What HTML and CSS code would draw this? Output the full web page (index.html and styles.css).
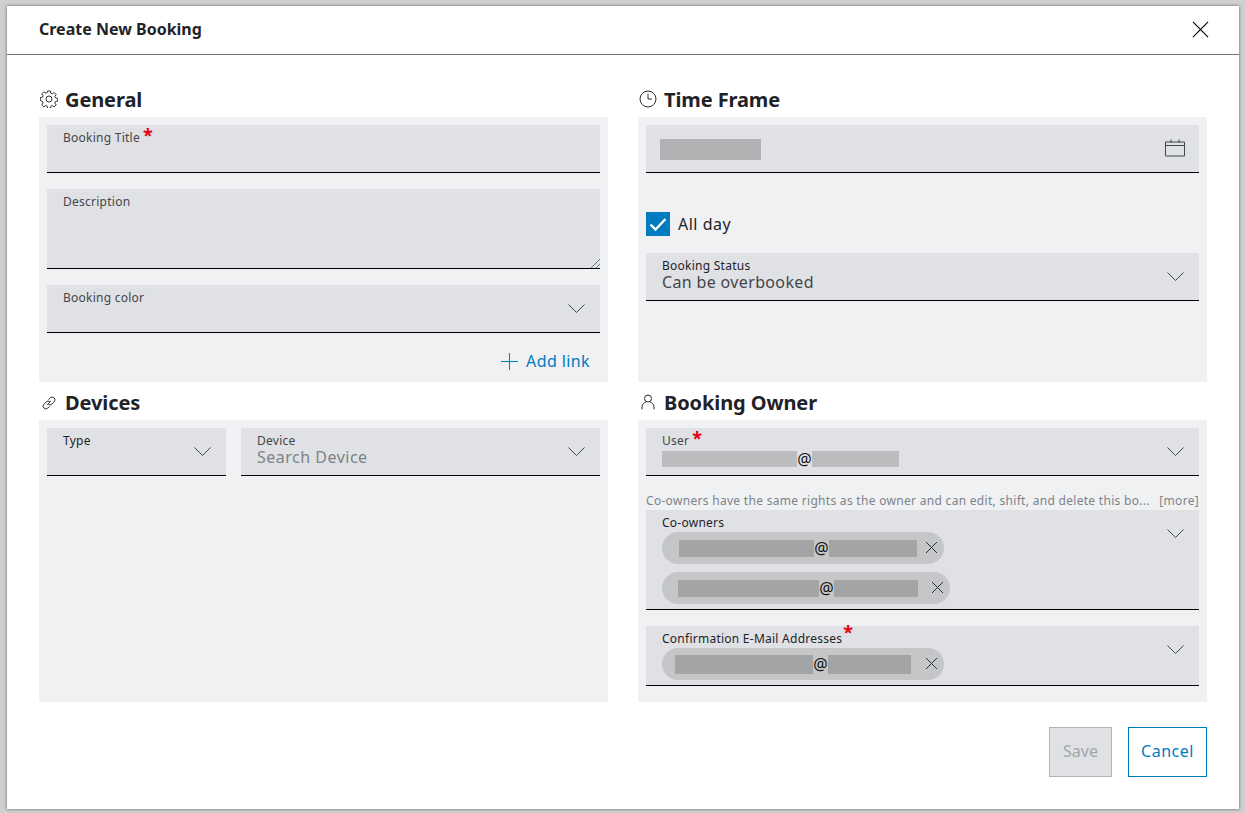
FILE: index.html
```html
<!DOCTYPE html>
<html lang="en">
<head>
    <meta charset="UTF-8">
    <meta name="viewport" content="width=device-width, initial-scale=1.0">
    <title>Create New Booking</title>
    <link rel="stylesheet" href="styles.css">
</head>
<body>

    <div class="modal">
        <div class="modal-header">
            <h1>Create New Booking</h1>
            <svg class="close-icon" viewBox="0 0 18 18"><path d="M1 1l16 16M17 1L1 17"/></svg>
        </div>

        <div class="modal-body">
            <section class="section">
                <h2>
                    <svg class="head-icon" viewBox="0 0 18 18"><circle cx="9" cy="9" r="3"/><path d="M7.6 1h2.8l.4 2.2 1.5.6 1.9-1.3 2 2-1.3 1.9.6 1.5 2.2.4v2.8l-2.2.4-.6 1.5 1.3 1.9-2 2-1.9-1.3-1.5.6-.4 2.2H7.6l-.4-2.2-1.5-.6-1.9 1.3-2-2 1.3-1.9-.6-1.5L.3 10.400V7.600l2.200-.4.6-1.500-1.300-1.900 2-2 1.900 1.300 1.500-.6z"/></svg>
                    General
                </h2>
                <div class="panel">
                    <div class="field">
                        <div class="field-main"><label>Booking Title<span class="req">*</span></label></div>
                    </div>
                    <div class="field field-tall">
                        <div class="field-main"><label>Description</label></div>
                        <svg class="resizer" viewBox="0 0 9 9"><path d="M0 9l9-9M5 9l4-4"/></svg>
                    </div>
                    <div class="field">
                        <div class="field-main"><label>Booking color</label></div>
                        <svg class="chevron" viewBox="0 0 17 9"><path d="M.5.5l8 8 8-8"/></svg>
                    </div>
                    <div class="add-link">
                        <svg viewBox="0 0 17 17"><path d="M8.500 0v17M0 8.500h17"/></svg>
                        Add link
                    </div>
                </div>
            </section>

            <section class="section">
                <h2>
                    <svg class="head-icon" viewBox="0 0 18 18"><circle cx="9" cy="9" r="8"/><path d="M9 3.500V9h4"/></svg>
                    Time Frame
                </h2>
                <div class="panel">
                    <div class="field field-date">
                        <div class="redacted date-block"></div>
                        <svg class="calendar" viewBox="0 0 20 18"><path d="M.5 3h19v14H.5zM.5 6.500h19M6 .5V4M14 .5V4"/></svg>
                    </div>
                    <div class="check-row">
                        <span class="checkbox"><svg viewBox="0 0 24 24"><path d="M4.500 12.500l5 5 10-10.500"/></svg></span>
                        All day
                    </div>
                    <div class="field field-status">
                        <div class="field-main">
                            <label class="dark">Booking Status</label>
                            <div class="value">Can be overbooked</div>
                        </div>
                        <svg class="chevron" viewBox="0 0 17 9"><path d="M.5.5l8 8 8-8"/></svg>
                    </div>
                </div>
            </section>

            <section class="section section-low">
                <h2>
                    <svg class="head-icon link-icon" viewBox="0 0 14 14"><path d="M5.200 8.800L8.800 5.200M6.500 3.600l1.700-1.700a2.500 2.500 0 0 1 3.900 3.900l-2.300 2.300a2.500 2.500 0 0 1-3.600 0M7.500 10.400l-1.700 1.700a2.500 2.500 0 0 1-3.900-3.900l2.300-2.300a2.500 2.500 0 0 1 3.600 0"/></svg>
                    Devices
                </h2>
                <div class="panel">
                    <div class="field-row">
                        <div class="field field-type">
                            <div class="field-main"><label class="dark">Type</label></div>
                            <svg class="chevron" viewBox="0 0 17 9"><path d="M.5.5l8 8 8-8"/></svg>
                        </div>
                        <div class="field field-device">
                            <div class="field-main">
                                <label>Device</label>
                                <div class="value placeholder">Search Device</div>
                            </div>
                            <svg class="chevron" viewBox="0 0 17 9"><path d="M.5.5l8 8 8-8"/></svg>
                        </div>
                    </div>
                </div>
            </section>

            <section class="section section-low">
                <h2>
                    <svg class="head-icon person-icon" viewBox="0 0 14 16"><circle cx="7" cy="4.500" r="3.500"/><path d="M1 15.500v-2.500c0-2.500 2-4.500 4-5M13 15.500v-2.500c0-2.500-2-4.500-4-5"/></svg>
                    Booking Owner
                </h2>
                <div class="panel">
                    <div class="field">
                        <div class="field-main">
                            <label>User<span class="req">*</span></label>
                            <div class="redacted-line">
                                <span class="redacted user-a"></span><span class="at">@</span><span class="redacted user-b"></span>
                            </div>
                        </div>
                        <svg class="chevron" viewBox="0 0 17 9"><path d="M.5.5l8 8 8-8"/></svg>
                    </div>
                    <div class="hint">
                        <span>Co-owners have the same rights as the owner and can edit, shift, and delete this bo...</span>
                        <span>[more]</span>
                    </div>
                    <div class="field field-multi">
                        <div class="field-main">
                            <label class="dark">Co-owners</label>
                            <div class="pill pill-one">
                                <span class="redacted pill-a"></span><span class="at">@</span><span class="redacted pill-b"></span>
                                <svg class="pill-x" viewBox="0 0 13 13"><path d="M1 1l11 11M12 1L1 12"/></svg>
                            </div>
                            <div class="pill pill-two">
                                <span class="redacted pill-a"></span><span class="at">@</span><span class="redacted pill-b"></span>
                                <svg class="pill-x" viewBox="0 0 13 13"><path d="M1 1l11 11M12 1L1 12"/></svg>
                            </div>
                        </div>
                        <svg class="chevron" viewBox="0 0 17 9"><path d="M.5.5l8 8 8-8"/></svg>
                    </div>
                    <div class="field field-multi field-confirm">
                        <div class="field-main">
                            <label class="dark">Confirmation E-Mail Addresses<span class="req req-high">*</span></label>
                            <div class="pill pill-three">
                                <span class="redacted pill-a"></span><span class="at">@</span><span class="redacted pill-b"></span>
                                <svg class="pill-x" viewBox="0 0 13 13"><path d="M1 1l11 11M12 1L1 12"/></svg>
                            </div>
                        </div>
                        <svg class="chevron" viewBox="0 0 17 9"><path d="M.5.5l8 8 8-8"/></svg>
                    </div>
                </div>
            </section>
        </div>

        <div class="modal-footer">
            <button class="btn btn-save">Save</button>
            <button class="btn btn-cancel">Cancel</button>
        </div>
    </div>

</body>
</html>
```

FILE: styles.css
```css
* { box-sizing: border-box; }
html, body { height: 100%; }
body {
    margin: 0;
    padding: 6px 6px 4px 7px;
    background: #cfcfcf;
    overflow: hidden;
    font-family: 'Noto Sans', sans-serif;
    color: #1f2328;
}
svg {
    fill: none;
    stroke: #2c3034;
    stroke-width: 1;
    display: block;
    flex: none;
}
.modal {
    height: 803px;
    background: #fff;
    box-shadow: 0 0 3px rgba(0, 0, 0, 0.55);
}
.modal-header {
    height: 49px;
    padding: 0 30px 2px 32px;
    display: flex;
    justify-content: space-between;
    align-items: center;
    border-bottom: 1px solid #71767c;
}
.modal-header h1 {
    margin: 0;
    font-size: 16px;
    font-weight: 700;
}
.close-icon { width: 17px; height: 17px; stroke: #000; stroke-width: 1.2; margin-top: 1px; }

.modal-body {
    padding: 30px 32px 0;
    display: grid;
    grid-template-columns: 569px 569px;
    grid-template-rows: 297px 320px;
    column-gap: 30px;
}
.section { display: flex; flex-direction: column; }
.section-low { padding-top: 6px; }
.section h2 {
    margin: 0;
    height: 32px;
    flex: none;
    display: flex;
    align-items: center;
    gap: 7px;
    padding-bottom: 2px;
    font-size: 20px;
    font-weight: 700;
    line-height: 28px;
    letter-spacing: -0.1px;
}
.head-icon { width: 18px; height: 18px; margin: 0 0 3px 1px; }
.link-icon { width: 14px; height: 14px; margin: 0 2px 1px 3px; }
.person-icon { width: 14px; height: 16px; margin: 0 2px 3px 3px; }

.panel {
    flex: 1;
    background: #eff1f2;
    padding: 8px;
    display: flex;
    flex-direction: column;
}
.field {
    position: relative;
    flex: none;
    display: flex;
    justify-content: space-between;
    height: 48px;
    padding: 5px 15px 0 16px;
    background: #dfe1e4;
    border-bottom: 1px solid #000;
    margin-bottom: 16px;
}
.field-tall { height: 80px; }
.field label {
    display: block;
    font-size: 12px;
    line-height: 16px;
    letter-spacing: 0.25px;
    color: #43464a;
}
.field label.dark { color: #1f2328; }
.value { font-size: 16px; line-height: 16px; letter-spacing: 0.35px; color: #43464a; }
.value.placeholder { color: #7d8389; letter-spacing: 0.5px; }
.req { color: #e20015; font-size: 18px; line-height: 10px; margin-left: 3px; font-weight: 700; }
.req-high { margin-left: 1px; position: relative; top: -4px; }
.chevron { width: 17px; height: 9px; margin-top: 14px; stroke: #43464a; }
.resizer { position: absolute; right: 0; bottom: 0; width: 9px; height: 9px; stroke: #71767c; }

.add-link {
    display: flex;
    justify-content: flex-end;
    align-items: center;
    gap: 8px;
    padding-right: 10px;
    font-size: 16px;
    line-height: 24px;
    letter-spacing: 0.4px;
    color: #007bc0;
}
.add-link svg { width: 17px; height: 17px; stroke: #007bc0; }

.field-date { padding: 14px 14px 0 14px; margin-bottom: 39px; }
.date-block { width: 101px; height: 21px; background: #b0b1b3; }
.calendar { width: 20px; height: 18px; stroke: #43464a; }
.check-row {
    display: flex;
    align-items: center;
    gap: 8px;
    height: 24px;
    margin-bottom: 17px;
    font-size: 16px;
    letter-spacing: 0.5px;
}
.checkbox { width: 24px; height: 24px; background: #007bc0; }
.checkbox svg { width: 24px; height: 24px; stroke: #fff; stroke-width: 2.4; }

.field-row { display: flex; gap: 15px; }
.field-type { width: 179px; margin: 0; }
.field-device { flex: 1; margin: 0; }

.redacted-line { display: flex; align-items: center; height: 16px; margin-top: 2px; }
.redacted { display: block; flex: none; }
.user-a { width: 135px; height: 16px; background: #bbbcbe; }
.user-b { width: 87px; height: 16px; background: #bbbcbe; }
.at { width: 15px; font-size: 16px; line-height: 16px; text-align: center; color: #111; flex: none; }

.hint {
    flex: none;
    height: 34px;
    margin-top: -16px;
    padding: 16px 0 0;
    display: flex;
    justify-content: space-between;
    font-size: 12px;
    line-height: 18px;
    letter-spacing: 0.3px;
    color: #7d8389;
}
.field-multi { height: 100px; }
.field-confirm { height: 60px; margin: 0; }

.pill {
    position: relative;
    display: flex;
    align-items: center;
    height: 32px;
    margin-top: 1px;
    margin-bottom: 8px;
    border-radius: 16px;
    background: #c4c6c8;
}
.pill .redacted { background: #a3a4a5; height: 17px; }
.pill-one { width: 282px; padding-left: 17px; }
.pill-one .pill-a { width: 135px; }
.pill-one .pill-b { width: 88px; }
.pill-two { width: 288px; padding-left: 16px; }
.pill-two .pill-a { width: 141px; }
.pill-two .pill-b { width: 84px; }
.pill-three { width: 282px; padding-left: 13px; }
.pill-three .pill-a { width: 138px; height: 19px; }
.pill-three .pill-b { width: 83px; height: 19px; }
.pill-x { position: absolute; right: 6px; top: 9px; width: 13px; height: 13px; stroke: #2c3034; }

.modal-footer {
    display: flex;
    justify-content: flex-end;
    gap: 16px;
    padding: 25px 32px 0;
}
.btn {
    height: 50px;
    padding: 0 0 2px;
    font-family: inherit;
    font-size: 16px;
    border-radius: 0;
}
.btn-save { width: 63px; background: #dfe1e4; border: 1px solid #b0b5ba; color: #a2a7ac; }
.btn-cancel { width: 79px; background: #fff; border: 1px solid #007bc0; color: #007bc0; letter-spacing: 0.5px; }
```
